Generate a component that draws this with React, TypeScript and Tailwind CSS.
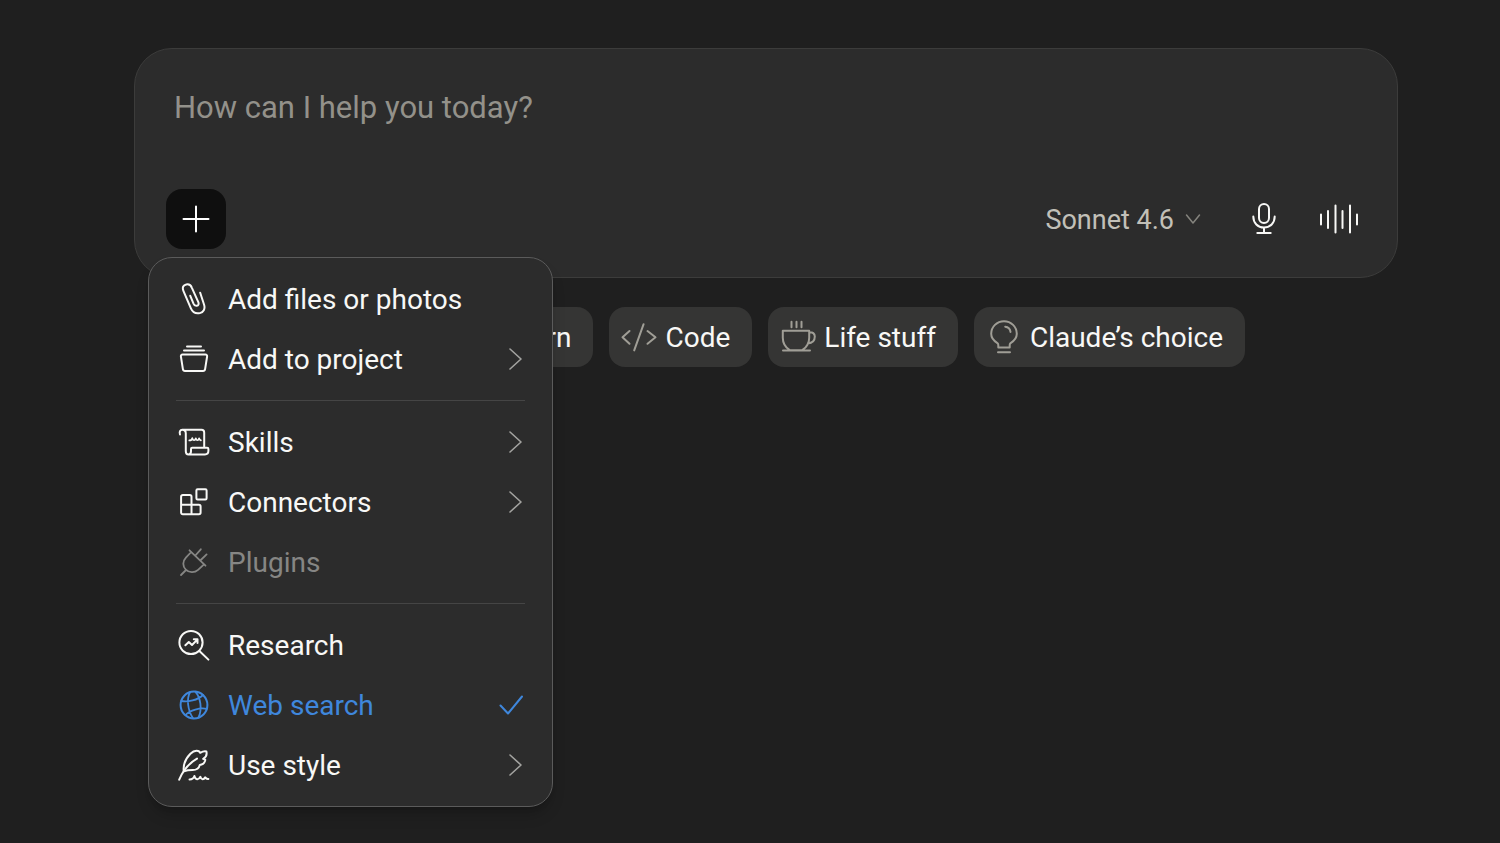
import React, { useState } from 'react';

type IconProps = {
  children: React.ReactNode;
  width?: number;
  height?: number;
  className?: string;
};

const Icon: React.FC<IconProps> = ({ children, width = 32, height = 32, className = '' }) => (
  <svg
    width={width}
    height={height}
    viewBox={`0 0 ${width} ${height}`}
    fill="none"
    stroke="currentColor"
    strokeWidth={2}
    strokeLinecap="round"
    strokeLinejoin="round"
    aria-hidden="true"
    className={`shrink-0 ${className}`}
  >
    {children}
  </svg>
);

const ChevronRight = () => (
  <Icon width={14} height={24} className="text-[#a3a3a0]">
    <path d="M1 2 12 12 1 22" strokeWidth={1.6} />
  </Icon>
);

const icons = {
  paperclip: (
    <Icon>
      <path d="M22.2 9.8 26.1 21.8C27.4 26 25.4 29.300 21.900 30.100 18.300 30.900 14.600 29.200 12.900 25.400L5.400 7.800C4 4.400 5.400 2 8.300 1.400 11 .9 13 2.400 13.900 4.800L20.200 18.800C21.200 21 20.300 22.500 18.800 22.800 17.300 23.100 16.200 22.200 15.500 20.600L12.300 12.800" />
    </Icon>
  ),
  project: (
    <Icon>
      <path d="M9 3.5h14M6 7.5h20M4.6 11.5h22.8c1.2 0 1.9.8 1.7 2l-2 12.6c-.2 1.2-1 1.9-2.1 1.9H7c-1.1 0-1.9-.7-2.1-1.9L2.9 13.5c-.2-1.2.5-2 1.7-2Z" />
    </Icon>
  ),
  skills: (
    <Icon>
      <path d="M2 8.5C1.2 6 2 3.8 4.3 3.8H23.5c1.7 0 2.7 1 2.7 2.7V21.8M4.3 3.8C6.6 3.8 7.8 5.3 7.8 7.4V25.2c0 2 1.1 3.200 2.800 3.200H27c2.100 0 3.400-1.600 3.400-3.600v-1.700c0-.8-.5-1.300-1.300-1.300H14.200c-.8 0-1.200.5-1.200 1.300v2.200c0 2-1 3.100-2.400 3.100" />
      <path d="M11.300 14.400c1.700 0 2.700-.9 3-2.200.7 2.700 2.800 2.700 3.500.1.700 2.600 2.600 2.600 3.300 0 .3 1.300.9 1.800 1.800 2" strokeWidth={1.700} />
    </Icon>
  ),
  connectors: (
    <Icon>
      <path d="M4.8 9h7c1 0 1.7.7 1.7 1.7V28.3H4.8c-1 0-1.7-.7-1.7-1.7V10.7C3.1 9.7 3.8 9 4.8 9ZM3.1 18.7h17.8c1 0 1.7.7 1.7 1.7v6.2c0 1-.7 1.7-1.7 1.7H13.5" />
      <rect x="18.4" y="3.2" width="10.2" height="10.2" rx="1.2" />
    </Icon>
  ),
  plugins: (
    <Icon>
      <path d="m11.5 4.3 16 15.4M3 29l5-5M17.8 9l5-5.7M22.8 14l5.8-5.6M13.2 6 7.9 11.6c-3.6 3.8-3.3 8.8-.1 12 3.4 3.3 8.6 3.5 12.3.2L26 18.3" strokeWidth={1.8} />
    </Icon>
  ),
  research: (
    <Icon>
      <circle cx="13" cy="13.5" r="11.6" />
      <path d="m21.4 22 9 8.6M7.4 16.2l3.4-3.2 3.2 3 5.3-5.4M15.8 10.3h3.7V14" />
    </Icon>
  ),
  globe: (
    <Icon>
      <circle cx="16" cy="16" r="13.4" />
      <path
        d="M12 3.200C8.500 9.500 9.500 21 15 29.200M17.500 2.800C22.500 8.500 24.500 20 20.500 28.500M3.200 12C9.500 13.500 20 11 25 6M7.500 26C12 21 22 18.500 28.800 19.800"
        strokeWidth={1.800}
      />
    </Icon>
  ),
  quill: (
    <Icon>
      <path d="M1.2 30.7C4.5 22.5 10 15 19 9.6" />
      <path d="M5.8 22.3C4.9 15.8 8 9.3 12.4 4.8c2.6-2.6 5.4-3.5 7.8-2.8 1 .3 1.6.9 2 1.8 1.8-1 4.2-1.8 6.2-1.3.7 3.2-.3 5.8-3.2 7.4l2.1.9c-.5 3-2.4 4.8-5.5 5.1-.8 3.7-3.7 5.2-7.3 5.2-3 0-5.6.2-8.7 1.2" />
      <path d="M11.500 30.400c2.600 0 4.300-1.200 4.900-3.400.9 4 4.300 4.300 6 .8.8 3.200 3.300 3.300 4.800.5.7 1.300 1.700 1.800 3.200 1.600" />
    </Icon>
  ),
};

type MenuItem = {
  label: string;
  icon: React.ReactNode;
  submenu?: boolean;
  checked?: boolean;
  disabled?: boolean;
};

const menuGroups: MenuItem[][] = [
  [
    { label: 'Add files or photos', icon: icons.paperclip },
    { label: 'Add to project', icon: icons.project, submenu: true },
  ],
  [
    { label: 'Skills', icon: icons.skills, submenu: true },
    { label: 'Connectors', icon: icons.connectors, submenu: true },
    { label: 'Plugins', icon: icons.plugins, disabled: true },
  ],
  [
    { label: 'Research', icon: icons.research },
    { label: 'Web search', icon: icons.globe, checked: true },
    { label: 'Use style', icon: icons.quill, submenu: true },
  ],
];

const suggestions = [
  {
    label: 'Learn',
    icon: (
      <Icon width={36} height={36}>
        <path d="m2 14 16-8 16 8-16 8-16-8ZM8 18v8c6 5 14 5 20 0v-8M34 14v10" />
      </Icon>
    ),
  },
  {
    label: 'Code',
    icon: (
      <Icon width={36} height={36}>
        <path d="m8.5 12-7 6.3 7 6.5M22.6 5.2l-9.4 26.2M26.5 12l8 6.3-8 6.5" />
      </Icon>
    ),
  },
  {
    label: 'Life stuff',
    icon: (
      <Icon width={36} height={36}>
        <path d="M11.5 2.8v5.4M16.5 2.8v5.4M21.5 2.8v5.4M3 31.4h27M2.8 11.8h26.4v7c0 5.5-2.6 9.7-7 12.4H9.8c-4.4-2.7-7-6.9-7-12.4v-7ZM29.2 13.2c3.400-.4 5.600 1.300 5.600 4.400 0 3.900-2.600 6.600-7 6.800" />
      </Icon>
    ),
  },
  {
    label: 'Claude’s choice',
    icon: (
      <Icon width={36} height={36}>
        <path d="M12.300 28.500v-2.600c0-.8-.3-1.300-.9-1.800C7.600 21.800 5.200 18.900 5.200 14.800 5.200 7.800 10.900 2.200 18 2.200s12.800 5.600 12.800 12.600c0 4.100-2.400 7-6.200 9.300-.6.5-.9 1-.9 1.800v2.600H12.300ZM12 33.300h12M19.200 7.700c2.900.3 4.900 2.400 5.300 5.200" />
      </Icon>
    ),
  },
];

const AddMenu: React.FC = () => (
  <div
    role="menu"
    className="absolute top-[68px] -left-[18px] z-10 w-[405px] rounded-3xl border border-[#5b5b5b] bg-[#2c2c2c] p-[11px] shadow-lg shadow-black/20"
  >
    {menuGroups.map((group, index) => (
      <React.Fragment key={index}>
        {index > 0 && <hr className="mx-4 my-[11px] border-t border-[#454545]" />}
        {group.map((item) => (
          <button
            key={item.label}
            type="button"
            role="menuitem"
            disabled={item.disabled}
            className={`flex h-[60px] w-full items-center gap-[18px] rounded-xl px-[18px] text-left ${
              item.checked ? 'text-[#3f87dc]' : item.disabled ? 'text-[#868684]' : 'text-[#f8f8f6]'
            }`}
          >
            {item.icon}
            <span className="flex-1 pt-0.5">{item.label}</span>
            {item.submenu && <ChevronRight />}
            {item.checked && (
              <Icon width={24} height={24}>
                <path d="m1.5 12.5 7.5 8L23 3.5" />
              </Icon>
            )}
          </button>
        ))}
      </React.Fragment>
    ))}
  </div>
);

export default function App() {
  const [menuOpen, setMenuOpen] = useState(true);

  return (
    <main className="min-h-screen bg-[#1f1f1f] pt-12 pr-[102px] pl-[134px] font-['Roboto','Liberation_Sans',sans-serif] text-[28px] leading-9 text-[#f8f8f6]">
      {/* Composer */}
      <form className="rounded-[38px] border border-[#3c3c3b] bg-[#2c2c2c] px-[31px] pt-[39px] pb-7">
        <textarea
          rows={1}
          aria-label="Message"
          placeholder="How can I help you today?"
          className="block h-10 w-full resize-none overflow-hidden bg-transparent px-2 text-[31px] leading-10 outline-none placeholder:text-[#93918a]"
        />
        <div className="mt-[61px] flex items-center justify-between">
          <div className="relative">
            <button
              type="button"
              aria-label="Add"
              aria-expanded={menuOpen}
              onClick={() => setMenuOpen(!menuOpen)}
              className="flex size-[60px] items-center justify-center rounded-2xl bg-[#0f0f0f] text-white"
            >
              <Icon>
                <path d="M16 3.5v25M3.5 16h25" />
              </Icon>
            </button>
            {menuOpen && <AddMenu />}
          </div>
          <div className="flex items-center pr-[7px]">
            <button type="button" className="mr-[45px] flex items-center gap-[11px] text-[27px] text-[#c2c0b8]">
              <span className="pt-0.5">Sonnet 4.6</span>
              <Icon width={16} height={16} className="text-[#85847e]">
                <path d="m1.5 4 6.5 8 6.5-8" strokeWidth={1.5} />
              </Icon>
            </button>
            <button type="button" aria-label="Dictate" className="mr-[37px]">
              <Icon width={36} height={36}>
                <rect x="13" y="3" width="10" height="19" rx="5" />
                <path d="M7.3 15.5C7.3 22 11.8 26.5 18 26.5s10.7-4.5 10.7-11M18 26.5V32M11.3 32h13.4" />
              </Icon>
            </button>
            <button type="button" aria-label="Voice mode">
              <Icon width={40} height={36}>
                <path d="M2 13.5v10M9 10v17M16.5 4.5v27M23.5 10v17M31 4.5v27M38 13.5v10" />
              </Icon>
            </button>
          </div>
        </div>
      </form>

      {/* Suggestions */}
      <div className="mt-[29px] flex justify-end gap-4 pr-[153px]">
        {suggestions.map(({ label, icon }) => (
          <button
            key={label}
            type="button"
            className="flex h-[60px] items-center gap-2 rounded-2xl bg-[#353534] pr-[22px] pl-3 whitespace-nowrap"
          >
            <span className="text-[#a09e96]">{icon}</span>
            <span className="pt-0.5">{label}</span>
          </button>
        ))}
      </div>
    </main>
  );
}
